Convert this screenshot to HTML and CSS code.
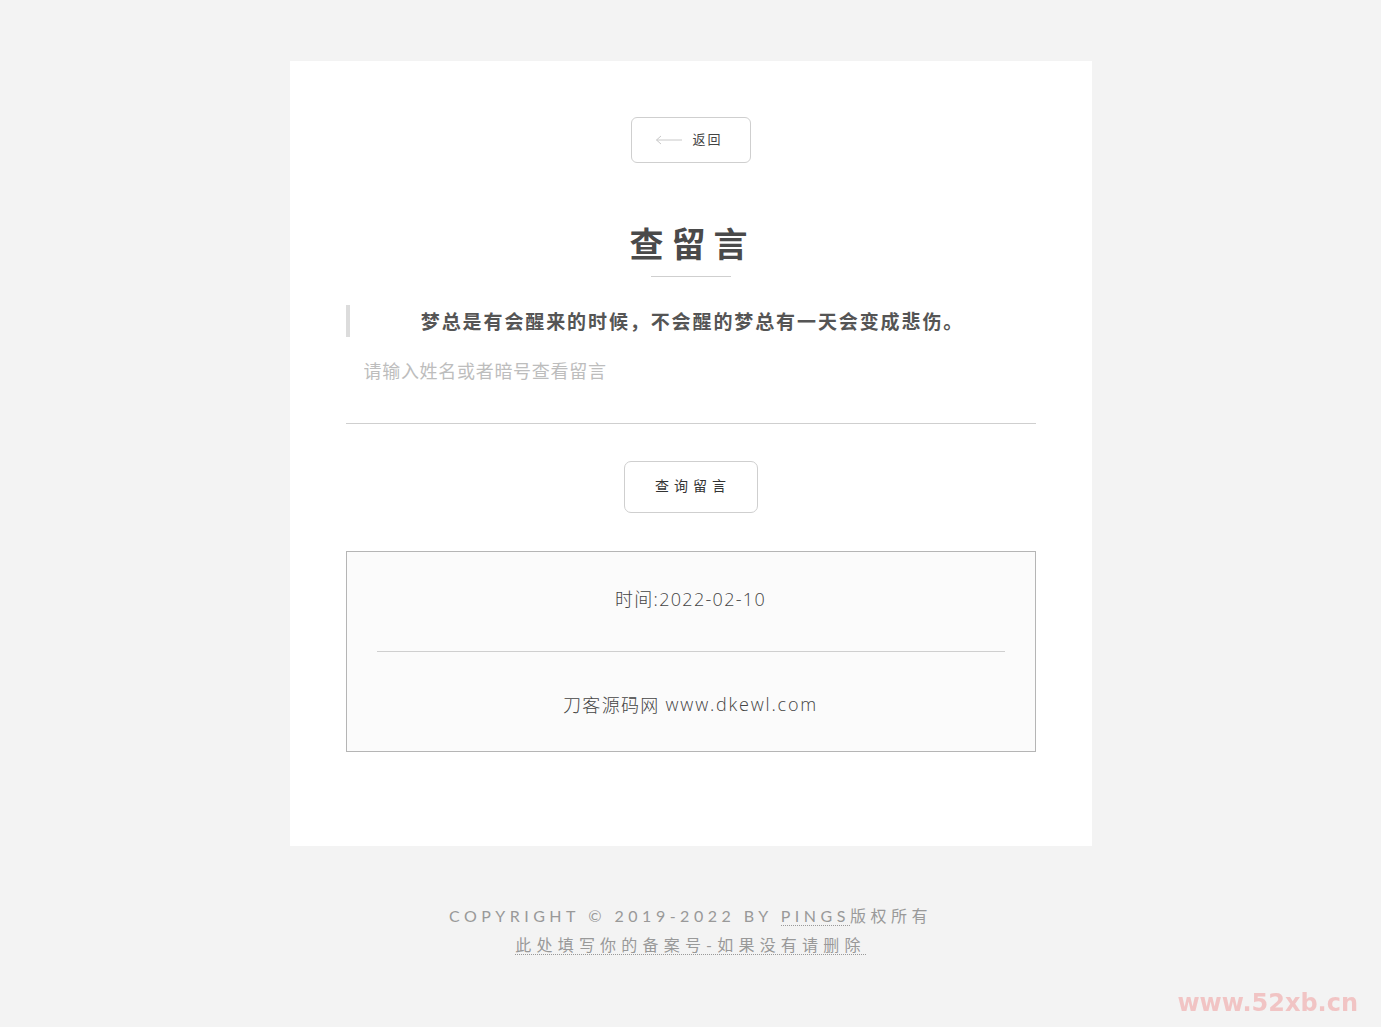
FILE: index.html
```html
<!DOCTYPE html>
<html lang="zh-CN">
<head>
<meta charset="utf-8">
<title>查留言</title>
<link rel="stylesheet" href="styles.css">
</head>
<body>
<div class="page">
  <main class="card">
    <div class="back-row">
      <a class="btn-back" href="#">
        <svg class="arrow" width="28" height="10" viewBox="0 0 28 10"><path d="M27 5H1.5M6 1L1.5 5L6 9" fill="none" stroke="#c8c8c8" stroke-width="1"/></svg>
        <span>返回</span>
      </a>
    </div>
    <h1 class="title">查留言</h1>
    <div class="title-line"></div>
    <blockquote class="quote">梦总是有会醒来的时候，不会醒的梦总有一天会变成悲伤。</blockquote>
    <input class="search" type="text" placeholder="请输入姓名或者暗号查看留言">
    <div class="submit-row"><button class="btn-submit">查询留言</button></div>
    <section class="result">
      <p class="result-text first">时间:2022-02-10</p>
      <hr class="result-hr">
      <p class="result-text second">刀客源码网 <span class="latin">www.dkewl.com</span></p>
    </section>
  </main>
  <footer class="footer">
    <p class="foot-line">COPYRIGHT © 2019-2022 BY <a href="#" class="foot-link">PINGS</a>版权所有</p>
    <p class="foot-line wide"><a href="#" class="foot-link">此处填写你的备案号-如果没有请删除</a></p>
  </footer>
</div>
<div class="watermark">www.52xb.cn</div>
</body>
</html>
```
FILE: styles.css
```css
html, body {
  margin: 0;
  padding: 0;
}
body {
  background: #f3f3f3;
  font-family: "Lato", "Noto Sans CJK SC", sans-serif;
  color: #555;
}
.page {
  display: flex;
  flex-direction: column;
  align-items: center;
  padding-top: 61px;
}
.card {
  width: 802px;
  box-sizing: border-box;
  background: #fff;
  padding: 56px 56px 94px;
  display: flex;
  flex-direction: column;
  align-items: stretch;
}
.back-row {
  display: flex;
  justify-content: center;
}
.btn-back {
  width: 120px;
  height: 46px;
  box-sizing: border-box;
  border: 1px solid #cfcfcf;
  border-radius: 6px;
  display: flex;
  align-items: center;
  justify-content: center;
  gap: 9px;
  text-decoration: none;
  color: #444;
  font-size: 13px;
  letter-spacing: 2px;
  padding: 0 3px 3px 0;
}
.arrow {
  display: block;
  margin-top: 3px;
}
.title {
  margin: 58px 0 0;
  text-align: center;
  font-size: 34px;
  line-height: 46px;
  font-weight: 700;
  letter-spacing: 8px;
  padding-left: 4px;
  color: #4a4a4a;
}
.title-line {
  width: 80px;
  height: 1px;
  background: #cfcfcf;
  align-self: center;
  margin-top: 9px;
}
.quote {
  margin: 28px 0 0;
  border-left: 4px solid #dcdcdc;
  padding: 5px 0 3px 0;
  text-align: center;
  font-size: 19px;
  line-height: 24px;
  font-weight: 700;
  letter-spacing: 1.9px;
  color: #555;
}
.search {
  margin-top: 11px;
  height: 76px;
  border: none;
  border-bottom: 1px solid #cfcfcf;
  padding: 0 18px 31px;
  outline: none;
  font-family: "Noto Sans CJK SC", sans-serif;
  font-size: 18px;
  letter-spacing: 0.7px;
  color: #555;
  background: transparent;
  box-sizing: border-box;
}
.search::placeholder {
  color: #bdbdbd;
}
.submit-row {
  display: flex;
  justify-content: center;
  margin-top: 37px;
}
.btn-submit {
  width: 134px;
  height: 52px;
  background: #fff;
  border: 1px solid #cfcfcf;
  border-radius: 7px;
  font-family: "Noto Sans CJK SC", sans-serif;
  font-size: 14px;
  letter-spacing: 5px;
  padding: 0 0 4px 5px;
  color: #333;
}
.result {
  margin-top: 38px;
  border: 1px solid #b5b5b5;
  background: #fbfbfb;
  padding: 0 30px;
  display: flex;
  flex-direction: column;
}
.result-text {
  margin: 0;
  height: 99px;
  box-sizing: border-box;
  display: flex;
  align-items: center;
  justify-content: center;
  gap: 6px;
  font-family: "Open Sans", "Noto Sans CJK SC", sans-serif;
  font-size: 18px;
  font-weight: 300;
  color: #444;
  letter-spacing: 1.3px;
}
.result-text .latin {
  letter-spacing: 1.8px;
}
.result-text.first {
  padding-bottom: 7px;
}
.result-text.second {
  padding-top: 5px;
}
.result-hr {
  margin: 0;
  border: none;
  border-top: 1px solid #cfcfcf;
}
.footer {
  margin-top: 55px;
  text-align: center;
}
.foot-line {
  margin: 0;
  font-size: 16px;
  line-height: 29px;
  letter-spacing: 4.5px;
  color: #999;
  font-weight: 400;
}
.foot-line.wide {
  letter-spacing: 5.2px;
}
.foot-link {
  color: #999;
  text-decoration: none;
  border-bottom: 1px dotted #999;
}
.watermark {
  position: fixed;
  right: 23px;
  bottom: 10px;
  font-family: "DejaVu Sans", sans-serif;
  font-weight: 700;
  font-size: 24px;
  color: rgba(240, 140, 140, 0.45);
  letter-spacing: 0;
}
```
